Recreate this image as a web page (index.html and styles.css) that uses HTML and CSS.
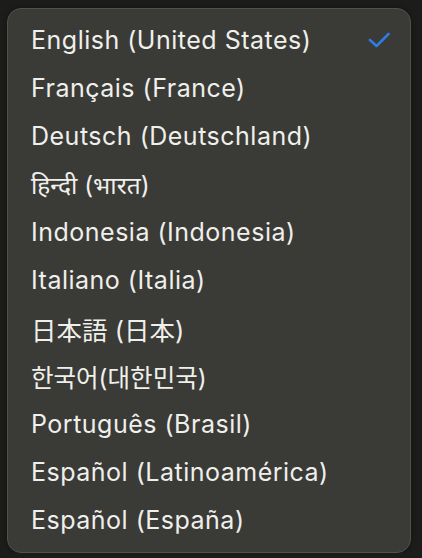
FILE: index.html
```html
<!DOCTYPE html>
<html lang="en">

<head>
    <meta charset="UTF-8">
    <meta name="viewport" content="width=device-width, initial-scale=1.0">
    <title>Language</title>
    <link rel="stylesheet" href="styles.css">
</head>

<body>
    <ul class="menu">
        <li class="item selected">
            <span>English (United States)</span>
            <svg class="check" width="22" height="16" viewBox="0 0 22 16">
                <path d="M2 8 L8.5 14 L20.5 2" fill="none" stroke="#2f7be0" stroke-width="2.6" stroke-linecap="round" stroke-linejoin="round" />
            </svg>
        </li>
        <li class="item"><span>Français (France)</span></li>
        <li class="item"><span>Deutsch (Deutschland)</span></li>
        <li class="item"><span lang="hi">हिन्दी (भारत)</span></li>
        <li class="item"><span>Indonesia (Indonesia)</span></li>
        <li class="item"><span>Italiano (Italia)</span></li>
        <li class="item"><span lang="ja">日本語 (日本)</span></li>
        <li class="item"><span lang="ko">한국어(대한민국)</span></li>
        <li class="item"><span>Português (Brasil)</span></li>
        <li class="item"><span>Español (Latinoamérica)</span></li>
        <li class="item"><span>Español (España)</span></li>
    </ul>
</body>

</html>
```

FILE: styles.css
```css
* {
    margin: 0;
    padding: 0;
    box-sizing: border-box;
}

body {
    background-color: #1c1c1b;
    font-family: Inter, "Noto Sans", "Noto Sans CJK JP", "Noto Sans CJK KR", sans-serif;
}

.menu {
    list-style: none;
    width: 404px;
    height: 545px;
    margin: 8px 0 0 7px;
    padding: 7px 0 8px;
    background-color: #3a3a36;
    border: 1.5px solid #52524c;
    border-radius: 14px;
    box-shadow: 0 0 4px rgba(0, 0, 0, 0.4);
}

.item {
    display: flex;
    align-items: center;
    justify-content: space-between;
    height: 48px;
    padding: 0 20px 0 23px;
    color: #efefeb;
    font-size: 25px;
    letter-spacing: 0.5px;
}

.item [lang="hi"] {
    letter-spacing: 0;
    font-size: 24.5px;
}

.item [lang="ja"] {
    letter-spacing: 0;
    font-size: 25.5px;
}

.item [lang="ko"] {
    letter-spacing: 0;
    font-size: 24.5px;
}

.check {
    display: block;
}
```
